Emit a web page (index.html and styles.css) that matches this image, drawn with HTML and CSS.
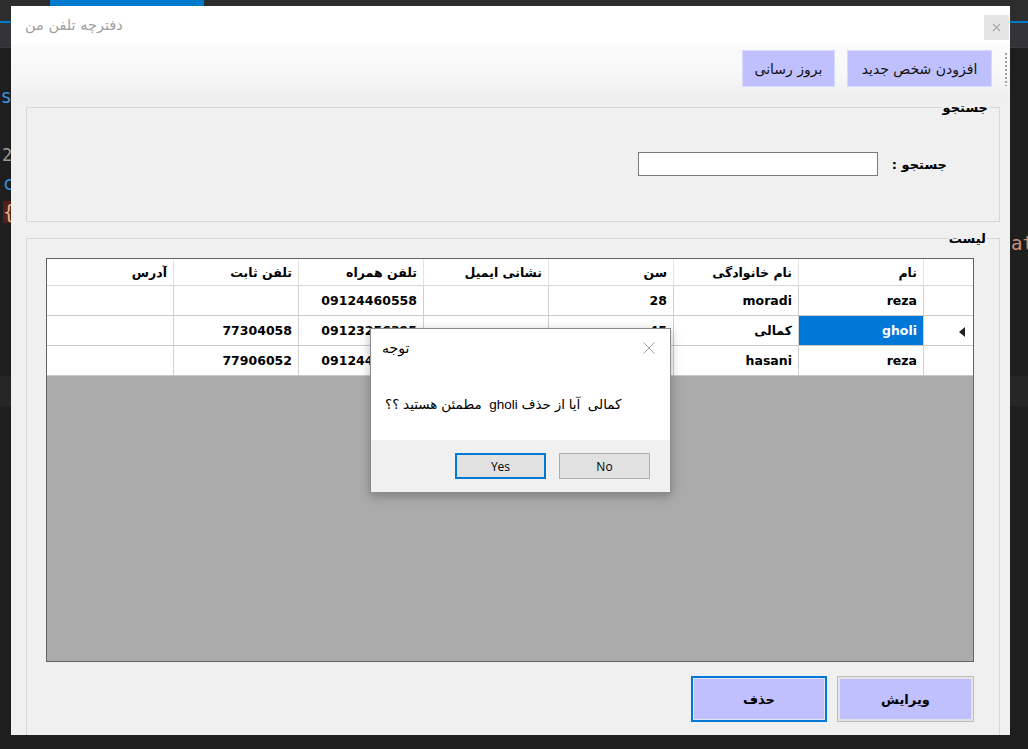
FILE: index.html
```html
<!DOCTYPE html>
<html lang="fa">
<head>
<meta charset="utf-8">
<title>دفترچه تلفن من</title>
<link rel="stylesheet" href="styles.css">
</head>
<body>
<div class="desktop">
  <div class="vs-tabs"><div class="vs-tab"></div></div>
  <div class="vs-line"></div>
  <div class="vs-crumb"></div>
  <div class="vs-band"></div>
  <span class="code code-es">es</span>
  <span class="code code-2">2</span>
  <span class="code code-c">c</span>
  <span class="code code-brace">{</span>
  <span class="code code-at">at</span>

  <div class="window">
    <div class="titlebar">
      <span class="title">دفترچه تلفن من</span>
      <button class="close" type="button">
        <svg width="9" height="9" viewBox="0 0 9 9"><path d="M1 1L8 8M8 1L1 8" stroke="#a8a8a8" stroke-width="1.1" fill="none"/></svg>
      </button>
    </div>

    <div class="toolbar" dir="rtl">
      <span class="grip"></span>
      <button class="tbtn tbtn-add" type="button">افزودن شخص جدید</button>
      <button class="tbtn tbtn-refresh" type="button">بروز رسانی</button>
    </div>

    <div class="content" dir="rtl">
      <fieldset class="group group-search">
        <legend>جستجو</legend>
        <div class="search-row">
          <label for="q" class="search-label">جستجو :</label>
          <input id="q" class="search-input" type="text">
        </div>
      </fieldset>

      <fieldset class="group group-list">
        <legend>لیست</legend>
        <div class="grid">
          <table class="table">
            <colgroup>
              <col class="c-head"><col class="c-std"><col class="c-std"><col class="c-std"><col class="c-std"><col class="c-std"><col class="c-std"><col>
            </colgroup>
            <thead>
              <tr class="hrow">
                <th class="rh"></th>
                <th>نام</th>
                <th>نام خانوادگی</th>
                <th>سن</th>
                <th>نشانی ایمیل</th>
                <th>تلفن همراه</th>
                <th>تلفن ثابت</th>
                <th>آدرس</th>
              </tr>
            </thead>
            <tbody>
              <tr>
                <td class="rh"></td>
                <td>reza</td>
                <td>moradi</td>
                <td>28</td>
                <td></td>
                <td>09124460558</td>
                <td></td>
                <td></td>
              </tr>
              <tr>
                <td class="rh"><span class="cur"></span></td>
                <td class="sel">gholi</td>
                <td>کمالی</td>
                <td>45</td>
                <td></td>
                <td>09123256395</td>
                <td>77304058</td>
                <td></td>
              </tr>
              <tr>
                <td class="rh"></td>
                <td>reza</td>
                <td>hasani</td>
                <td>30</td>
                <td></td>
                <td>09124456789</td>
                <td>77906052</td>
                <td></td>
              </tr>
            </tbody>
          </table>
        </div>
        <div class="actions">
          <button class="abtn abtn-edit" type="button">ویرایش</button>
          <button class="abtn abtn-del" type="button">حذف</button>
        </div>
      </fieldset>
    </div>
  </div>

  <div class="dialog" role="dialog">
    <div class="dlg-head">
      <span class="dlg-title">توجه</span>
      <svg class="dlg-x" width="12" height="12" viewBox="0 0 12 12"><path d="M0.5 0.5L11.5 11.5M11.5 0.5L0.5 11.5" stroke="#a0a0a0" stroke-width="1" fill="none"/></svg>
    </div>
    <div class="dlg-body">
      <p class="dlg-msg" dir="rtl">کمالی  آیا از حذف gholi  مطمئن هستید ؟؟</p>
    </div>
    <div class="dlg-foot">
      <button class="dbtn dbtn-yes" type="button">Yes</button>
      <button class="dbtn" type="button">No</button>
    </div>
  </div>
</div>
</body>
</html>
```

FILE: styles.css
```css
html, body {
  margin: 0;
  padding: 0;
}

body {
  width: 1028px;
  height: 749px;
  overflow: hidden;
  background: #1e1e1e;
  font-family: "DejaVu Sans", sans-serif;
}

.desktop {
  position: relative;
  width: 1028px;
  height: 749px;
  overflow: hidden;
}

/* editor backdrop */
.vs-tabs {
  height: 21px;
  background: #2d2d2d;
  display: flex;
}
.vs-tab {
  margin-left: 50px;
  width: 154px;
  background: #007acc;
}
.vs-line {
  height: 2px;
  background: #007acc;
}
.vs-crumb {
  height: 24px;
  background: #333337;
  border-bottom: 1px solid #3c3c3c;
}
.vs-band {
  position: absolute;
  left: 0;
  top: 376px;
  width: 1028px;
  height: 30px;
  background: #262626;
}
.code {
  position: absolute;
  font-family: "DejaVu Sans Mono", monospace;
  font-size: 19px;
  line-height: 22px;
}
.code-es { left: -11px; top: 85px; color: #3b8fd8; }
.code-2 { left: 2px; top: 144px; color: #9a9a9a; font-size: 17px; }
.code-c { left: 3px; top: 172px; color: #3b8fd8; }
.code-brace { left: 3px; top: 201px; color: #d7ba7d; background: #5a1d1d; }
.code-at { left: 1011px; top: 232px; color: #ce9178; }

/* main window */
.window {
  position: absolute;
  left: 11px;
  top: 6px;
  width: 999px;
  height: 729px;
  background: #f0f0f0;
  overflow: hidden;
}

.titlebar {
  height: 38px;
  background: #ffffff;
  display: flex;
  justify-content: space-between;
  align-items: flex-start;
}
.title {
  margin: 11px 0 0 14px;
  font-size: 14.5px;
  line-height: 17px;
  color: #a0a0a0;
}
.close {
  margin: 9px 1px 0 0;
  width: 25px;
  height: 25px;
  padding: 0;
  border: 0;
  background: #e5e5e5;
  display: flex;
  align-items: center;
  justify-content: center;
}

.toolbar {
  height: 55px;
  box-sizing: border-box;
  padding: 6px 3px 0 0;
  background: linear-gradient(#fbfbfb 0%, #f7f7f7 55%, #efefef 100%);
  display: flex;
  align-items: flex-start;
  gap: 12px;
}
.grip {
  width: 2px;
  height: 33px;
  margin: 3px 0 0 1px;
  background: repeating-linear-gradient(#a2a2a2 0 2px, transparent 2px 4px);
}
.tbtn {
  height: 37px;
  padding: 0;
  border: 1px solid #d9d9ff;
  background: #c0c0ff;
  font-family: "DejaVu Sans", sans-serif;
  font-size: 14px;
  color: #111;
}
.tbtn-add { width: 145px; }
.tbtn-refresh { width: 93px; }

.content {
  padding: 0 10px 0 15px;
}

.group {
  margin: 0;
  padding: 0;
  border: 1px solid #d7d7d7;
  min-inline-size: 0;
}
.group legend {
  padding: 0 1px;
  font-size: 13px;
  line-height: 17px;
  font-weight: bold;
  color: #000;
}
.group-search legend { margin-right: 10px; }
.group-list legend { margin-right: 12px; }

.search-row {
  display: flex;
  align-items: center;
  gap: 14px;
  height: 24px;
  padding: 36px 52px 45px 0;
}
.search-label {
  font-size: 13px;
  font-weight: bold;
  color: #000;
}
.search-input {
  width: 240px;
  height: 24px;
  box-sizing: border-box;
  border: 1px solid #7a7a7a;
  background: #fff;
  margin: 0;
}

.group-list {
  margin-top: 8px;
  height: 520px;
}

.grid {
  margin: 11px 25px 0 19px;
  height: 404px;
  box-sizing: border-box;
  border: 1px solid #646464;
  background: #ababab;
}
.table {
  width: 926px;
  table-layout: fixed;
  border-collapse: separate;
  border-spacing: 0;
  font-size: 12.5px;
  font-weight: bold;
  color: #000;
}
.c-head { width: 50px; }
.c-std { width: 125px; }
.table th,
.table td {
  padding: 0 6px 0 0;
  text-align: right;
  background: #fff;
  border-left: 1px solid #d0d0d0;
  border-bottom: 1px solid #c8c8c8;
  white-space: nowrap;
  overflow: hidden;
}
.table th { border-left-color: #e4e4e4; border-bottom-color: #d8d8d8; }
.table th:last-child,
.table td:last-child { border-left: 0; }
.hrow { height: 27px; }
.table tbody tr { height: 30px; }
.table td.sel {
  background: #0078d7;
  color: #fff;
}
.table .rh { padding-right: 8px; }
.cur {
  display: inline-block;
  width: 0;
  height: 0;
  border-top: 5px solid transparent;
  border-bottom: 5px solid transparent;
  border-right: 6px solid #222;
  vertical-align: middle;
}

.actions {
  display: flex;
  gap: 10px;
  margin: 14px 25px 0 0;
}
.abtn {
  height: 46px;
  padding: 0;
  background: #c0c0ff;
  font-family: "DejaVu Sans", sans-serif;
  font-size: 13px;
  font-weight: bold;
  color: #000;
}
.abtn-edit {
  width: 137px;
  border: 1px solid #bdbdbd;
  box-shadow: inset 0 0 0 2px #e4e4e4;
}
.abtn-del {
  width: 136px;
  border: 2px solid #0078d7;
  box-shadow: inset 0 0 0 1px #e6e6f2;
}

/* message box */
.dialog {
  position: absolute;
  left: 370px;
  top: 328px;
  width: 301px;
  height: 165px;
  box-sizing: border-box;
  border: 1px solid #8c8c8c;
  background: #fff;
  box-shadow: 0 3px 10px rgba(0, 0, 0, 0.28);
  display: flex;
  flex-direction: column;
}
.dlg-head {
  height: 38px;
  display: flex;
  justify-content: space-between;
  align-items: center;
  padding: 0 15px 0 11px;
}
.dlg-title {
  font-size: 14px;
  color: #000;
}
.dlg-body {
  height: 73px;
  display: flex;
  align-items: center;
}
.dlg-msg {
  margin: 0 0 0 14px;
  font-family: "Liberation Sans", "DejaVu Sans", sans-serif;
  font-size: 13.5px;
  white-space: pre;
  text-align: left;
  color: #000;
}
.dlg-foot {
  flex: 1;
  background: #f0f0f0;
  display: flex;
  justify-content: flex-end;
  align-items: flex-start;
  gap: 13px;
  padding: 13px 20px 0 0;
}
.dbtn {
  width: 91px;
  height: 26px;
  padding: 0;
  border: 1px solid #adadad;
  background: #e1e1e1;
  font-family: "Open Sans", "DejaVu Sans", sans-serif;
  font-size: 12px;
  color: #000;
}
.dbtn-yes {
  border: 2px solid #0078d7;
}
```
